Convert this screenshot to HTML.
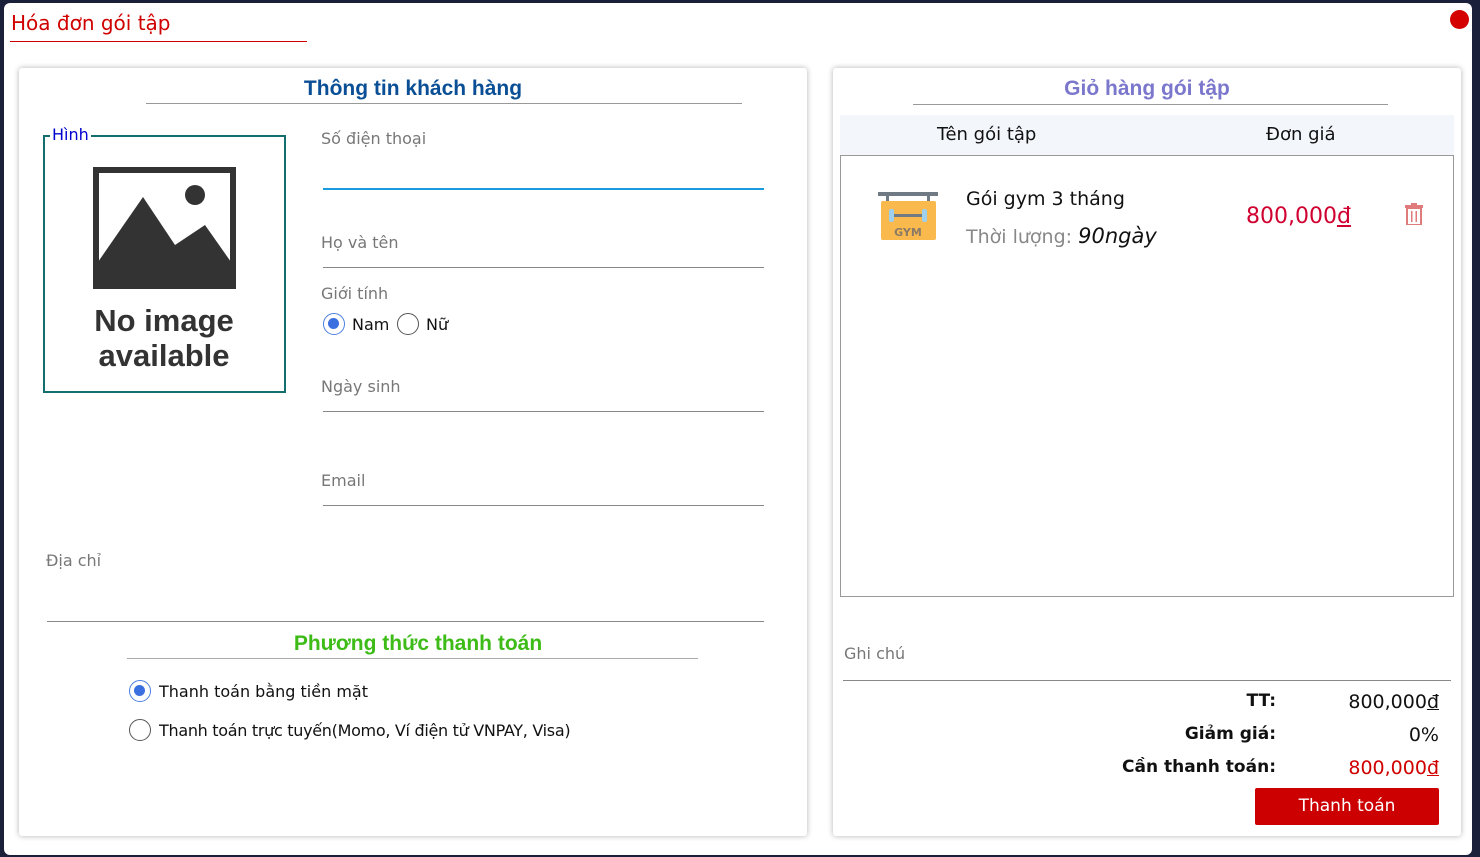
<!DOCTYPE html>
<html><head><meta charset="utf-8"><style>
*{margin:0;padding:0;box-sizing:border-box}
body{width:1480px;height:857px;position:relative;overflow:hidden;background:#1a1f3a;font-family:"DejaVu Sans","Liberation Sans",sans-serif;font-size:16px;color:#111}
.dlg{position:absolute;left:4px;top:3px;width:1468px;height:852px;background:#fff;border-radius:6px}
.a{position:absolute}
.card{position:absolute;background:#fff;box-shadow:0 0 6px rgba(0,0,0,.3);border-radius:3px}
.lbl{position:absolute;color:#777;font-size:16px}
.ln{position:absolute;height:1px;background:#888}
.radio{position:absolute;width:22px;height:22px;border:1.5px solid #555;border-radius:50%;background:#fff}
.radio.on{border-color:#4a7fe0}
.radio.on:after{content:"";position:absolute;left:4px;top:4px;width:11px;height:11px;border-radius:50%;background:#3a6fe0}
</style></head><body>
<div class="dlg">
<div class="a" style="left:7px;top:8px;color:#d00000;font-size:20px">Hóa đơn gói tập</div>
<div class="a" style="left:6px;top:38px;width:297px;height:1px;background:#c00"></div>
<div class="a" style="left:1446px;top:7px;width:19px;height:19px;border-radius:50%;background:#d40000"></div>

<div class="card" style="left:15px;top:65px;width:788px;height:768px">
 <div class="a" style="left:0;width:788px;top:9px;text-align:center;color:#0a4f96;font-weight:bold;font-size:21px;font-family:'Liberation Sans',sans-serif">Thông tin khách hàng</div>
 <div class="ln" style="left:127px;top:35px;width:596px;background:#999"></div>
 <div class="a" style="left:24px;top:67px;width:243px;height:258px;border:2px solid #136e6e"></div>
 <div class="a" style="left:31px;top:57px;background:#fff;color:#0000d0;font-size:16px;padding:0 2px">Hình</div>
 <svg class="a" style="left:74px;top:99px" width="143" height="122" viewBox="0 0 143 122"><rect x="3" y="3" width="137" height="116" fill="#fff" stroke="#333" stroke-width="6"/><path d="M5 117 L5 95 L50 30 L82 78 L112 58 L138 95 L138 117Z" fill="#333"/><circle cx="102" cy="28" r="10" fill="#333"/></svg>
 <div class="a" style="left:45px;top:235px;width:200px;text-align:center;font-weight:bold;font-size:31px;line-height:35px;color:#333;font-family:'Liberation Sans',sans-serif">No image<br>available</div>
 <div class="lbl" style="left:302px;top:61px">Số điện thoại</div>
 <div class="a" style="left:304px;top:120px;width:441px;height:2px;background:#1a9be0"></div>
 <div class="lbl" style="left:302px;top:165px">Họ và tên</div>
 <div class="ln" style="left:304px;top:199px;width:441px"></div>
 <div class="lbl" style="left:302px;top:216px">Giới tính</div>
 <div class="radio on" style="left:304px;top:245px"></div><div class="a" style="left:333px;top:247px;font-size:16px">Nam</div>
 <div class="radio" style="left:378px;top:245px"></div><div class="a" style="left:407px;top:247px;font-size:16px">Nữ</div>
 <div class="lbl" style="left:302px;top:309px">Ngày sinh</div>
 <div class="ln" style="left:304px;top:343px;width:441px"></div>
 <div class="lbl" style="left:302px;top:403px">Email</div>
 <div class="ln" style="left:304px;top:437px;width:441px"></div>
 <div class="lbl" style="left:27px;top:483px">Địa chỉ</div>
 <div class="ln" style="left:28px;top:553px;width:717px"></div>
 <div class="a" style="left:0;width:798px;top:564px;text-align:center;color:#3dbb16;font-weight:bold;font-size:21px;font-family:'Liberation Sans',sans-serif">Phương thức thanh toán</div>
 <div class="ln" style="left:108px;top:590px;width:571px;background:#aaa"></div>
 <div class="radio on" style="left:110px;top:612px"></div><div class="a" style="left:140px;top:614px;font-size:16px">Thanh toán bằng tiền mặt</div>
 <div class="radio" style="left:110px;top:651px"></div><div class="a" style="left:140px;top:653px;font-size:16px;letter-spacing:-.3px">Thanh toán trực tuyến(Momo, Ví điện tử VNPAY, Visa)</div>
</div>

<div class="card" style="left:829px;top:65px;width:628px;height:768px">
 <div class="a" style="left:0;width:628px;top:9px;text-align:center;color:#7a77cc;font-weight:bold;font-size:21px;font-family:'Liberation Sans',sans-serif">Giỏ hàng gói tập</div>
 <div class="ln" style="left:80px;top:36px;width:475px;background:#999"></div>
 <div class="a" style="left:7px;top:47px;width:614px;height:40px;background:#f3f7fc"></div>
 <div class="a" style="left:104px;top:56px;font-size:18px">Tên gói tập</div>
 <div class="a" style="left:433px;top:56px;font-size:18px">Đơn giá</div>
 <div class="a" style="left:7px;top:87px;width:614px;height:442px;border:1px solid #999"></div>
 <svg class="a" style="left:44px;top:122px" width="62" height="52" viewBox="0 0 62 52"><rect x="1" y="2" width="60" height="4" fill="#6f7a85"/><rect x="9" y="6" width="3" height="6" fill="#6f7a85"/><rect x="50" y="6" width="3" height="6" fill="#6f7a85"/><rect x="4" y="11" width="55" height="39" rx="2" fill="#f9b94d"/><rect x="14" y="24" width="34" height="3" fill="#6f7a85"/><rect x="12" y="19" width="5" height="13" rx="2" fill="#9fd0ee"/><rect x="45" y="19" width="5" height="13" rx="2" fill="#9fd0ee"/><text x="31" y="46" font-size="11" font-weight="bold" fill="#8a7a66" text-anchor="middle" font-family="DejaVu Sans">GYM</text></svg>
 <div class="a" style="left:133px;top:120px;font-size:19px">Gói gym 3 tháng</div>
 <div class="a" style="left:133px;top:156px;font-size:19px;color:#888">Thời lượng: <i style="color:#111;font-size:21px">90ngày</i></div>
 <div class="a" style="left:413px;top:136px;font-size:22px;color:#d00030">800,000<u>đ</u></div>
 <svg class="a" style="left:572px;top:135px" width="18" height="22" viewBox="0 0 18 22"><rect x="0" y="2" width="18" height="3" fill="#e07b7b"/><rect x="6" y="0" width="6" height="3" fill="#e07b7b"/><rect x="2" y="5" width="14" height="17" fill="none" stroke="#e07b7b" stroke-width="2"/><rect x="6" y="8" width="1.5" height="11" fill="#e07b7b"/><rect x="10.5" y="8" width="1.5" height="11" fill="#e07b7b"/></svg>
 <div class="lbl" style="left:11px;top:576px">Ghi chú</div>
 <div class="ln" style="left:10px;top:612px;width:608px"></div>
 <div class="a" style="right:185px;top:623px;font-weight:bold;font-size:17px">TT:</div>
 <div class="a" style="right:22px;top:623px;font-size:19px">800,000<u>đ</u></div>
 <div class="a" style="right:185px;top:656px;font-weight:bold;font-size:17px">Giảm giá:</div>
 <div class="a" style="right:22px;top:656px;font-size:19px">0%</div>
 <div class="a" style="right:185px;top:689px;font-weight:bold;font-size:17px">Cần thanh toán:</div>
 <div class="a" style="right:22px;top:689px;font-size:19px;color:#d00000">800,000<u>đ</u></div>
 <div class="a" style="left:422px;top:720px;width:184px;height:37px;background:#cc0000;border-radius:2px;color:#fff;text-align:center;line-height:37px;font-size:17px">Thanh toán</div>
</div>
</div>
</body></html>
